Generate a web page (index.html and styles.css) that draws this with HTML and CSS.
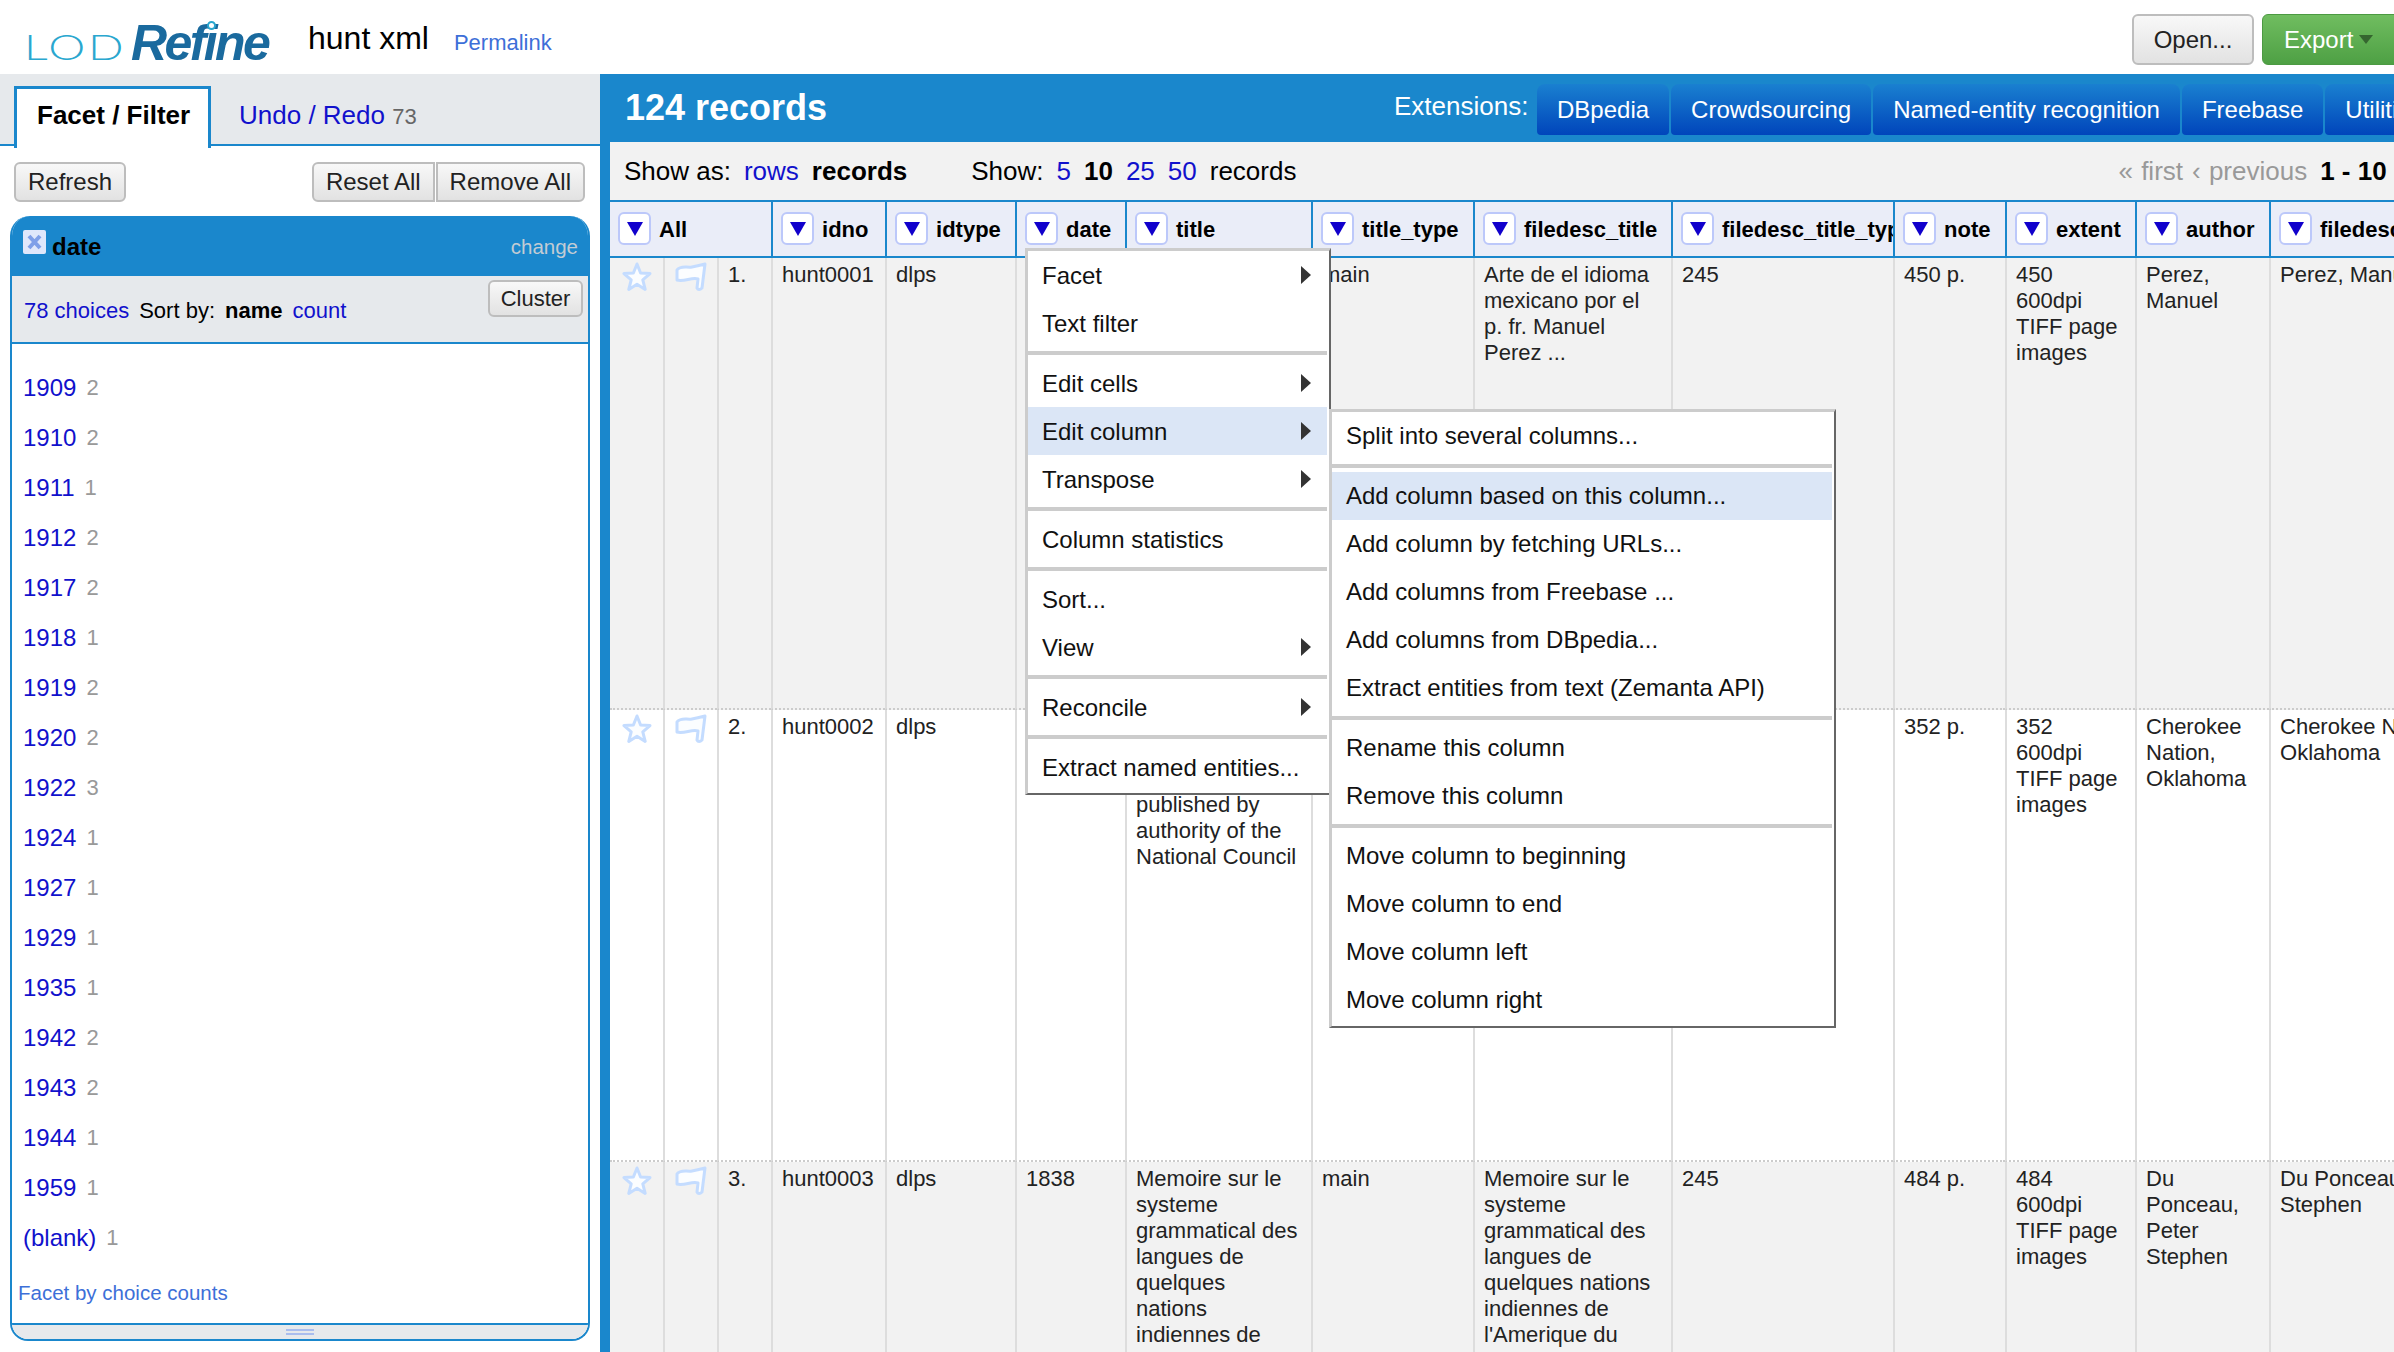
FILE: index.html
```html
<!DOCTYPE html>
<html>
<head>
    <meta charset="utf-8">
    <title>hunt xml - LOD Refine</title>
    <link rel="stylesheet" href="styles.css">
</head>
<body>
    <svg class="defs" width="0" height="0">
        <symbol id="star" viewBox="0 0 30 30">
            <path d="M15 2 L18.6 11 L28 11.6 L20.8 17.8 L23.2 27.4 L15 22.2 L6.8 27.4 L9.2 17.8 L2 11.6 L11.4 11 Z"/>
        </symbol>
        <symbol id="flag" viewBox="0 0 32 30">
            <path d="M2 8 C6 3 12 6 17 5 C22 4 26 3 30 2 L27 26 C25 28 23 28 22 26 L23 17 C17 15 9 20 2 18 Z"/>
        </symbol>
    </svg>

    <header class="app-header">
        <div class="logo">
            <span class="logo-lod">LOD</span><span class="logo-refine">Refine</span>
            <span class="logo-ring"></span>
        </div>
        <span class="project-name">hunt xml</span>
        <a class="permalink">Permalink</a>
        <div class="header-actions">
            <button class="btn btn-open">Open...</button>
            <button class="btn-export">Export<span class="caret"></span></button>
        </div>
    </header>

    <main class="app-main">
        <aside class="left-panel">
            <div class="tabs">
                <div class="tab tab-active">Facet / Filter</div>
                <div class="tab"><a>Undo / Redo</a> <span class="tab-count">73</span></div>
            </div>

            <div class="facet-actions">
                <button class="btn">Refresh</button>
                <div class="btn-group">
                    <button class="btn">Reset All</button>
                    <button class="btn">Remove All</button>
                </div>
            </div>

            <section class="facet">
                <div class="facet-title">
                    <svg class="facet-close" viewBox="0 0 23 24">
                        <rect width="23" height="24" rx="2"/>
                        <path d="M6 6 L17 18 M17 6 L6 18"/>
                    </svg>
                    <span class="facet-name">date</span>
                    <span class="facet-change">change</span>
                </div>
                <div class="facet-controls">
                    <a>78 choices</a>
                    <span>Sort by:</span>
                    <b>name</b>
                    <a>count</a>
                    <button class="btn btn-cluster">Cluster</button>
                </div>
                <div class="facet-body">
                    <div class="choice"><a>1909</a><span>2</span></div>
                    <div class="choice"><a>1910</a><span>2</span></div>
                    <div class="choice"><a>1911</a><span>1</span></div>
                    <div class="choice"><a>1912</a><span>2</span></div>
                    <div class="choice"><a>1917</a><span>2</span></div>
                    <div class="choice"><a>1918</a><span>1</span></div>
                    <div class="choice"><a>1919</a><span>2</span></div>
                    <div class="choice"><a>1920</a><span>2</span></div>
                    <div class="choice"><a>1922</a><span>3</span></div>
                    <div class="choice"><a>1924</a><span>1</span></div>
                    <div class="choice"><a>1927</a><span>1</span></div>
                    <div class="choice"><a>1929</a><span>1</span></div>
                    <div class="choice"><a>1935</a><span>1</span></div>
                    <div class="choice"><a>1942</a><span>2</span></div>
                    <div class="choice"><a>1943</a><span>2</span></div>
                    <div class="choice"><a>1944</a><span>1</span></div>
                    <div class="choice"><a>1959</a><span>1</span></div>
                    <div class="choice"><a>(blank)</a><span>1</span></div>
                    <a class="facet-counts">Facet by choice counts</a>
                </div>
                <div class="facet-grip"><span></span></div>
            </section>
        </aside>

        <section class="right-panel">
            <div class="summary-bar">
                <h2 class="record-count">124 records</h2>
                <span class="extensions-label">Extensions:</span>
                <div class="extensions">
                    <button class="ext-btn">DBpedia</button>
                    <button class="ext-btn">Crowdsourcing</button>
                    <button class="ext-btn">Named-entity recognition</button>
                    <button class="ext-btn">Freebase</button>
                    <button class="ext-btn">Utilities</button>
                </div>
            </div>

            <div class="view-bar">
                <span>Show as:</span>
                <a>rows</a>
                <b>records</b>
                <span class="show-label">Show:</span>
                <a>5</a>
                <b>10</b>
                <a>25</a>
                <a>50</a>
                <span>records</span>
                <div class="pager">
                    <span class="pager-off">« first</span>
                    <span class="pager-off">‹ previous</span>
                    <b class="pager-range">1 - 10</b>
                </div>
            </div>

            <div class="table-wrap">
                <table class="data-table">
                    <colgroup>
                        <col class="c-star"><col class="c-flag"><col class="c-num">
                        <col class="c-idno"><col class="c-idtype"><col class="c-date">
                        <col class="c-title"><col class="c-type"><col class="c-ftitle">
                        <col class="c-ftype"><col class="c-note"><col class="c-extent">
                        <col class="c-author"><col class="c-fauthor">
                    </colgroup>
                    <thead>
                        <tr>
                            <th colspan="3"><div class="col-head"><span class="col-btn"></span>All</div></th>
                            <th><div class="col-head"><span class="col-btn"></span>idno</div></th>
                            <th><div class="col-head"><span class="col-btn"></span>idtype</div></th>
                            <th><div class="col-head"><span class="col-btn"></span>date</div></th>
                            <th><div class="col-head"><span class="col-btn"></span>title</div></th>
                            <th><div class="col-head"><span class="col-btn"></span>title_type</div></th>
                            <th><div class="col-head"><span class="col-btn"></span>filedesc_title</div></th>
                            <th><div class="col-head"><span class="col-btn"></span>filedesc_title_type</div></th>
                            <th><div class="col-head"><span class="col-btn"></span>note</div></th>
                            <th><div class="col-head"><span class="col-btn"></span>extent</div></th>
                            <th><div class="col-head"><span class="col-btn"></span>author</div></th>
                            <th><div class="col-head"><span class="col-btn"></span>filedesc_author</div></th>
                        </tr>
                    </thead>
                    <tbody>
                        <tr class="row-odd">
                            <td class="icon-cell"><svg class="icon-star"><use href="#star"/></svg></td>
                            <td class="icon-cell"><svg class="icon-flag"><use href="#flag"/></svg></td>
                            <td>1.</td>
                            <td>hunt0001</td>
                            <td>dlps</td>
                            <td></td>
                            <td></td>
                            <td>main</td>
                            <td>Arte de el idioma<br>mexicano por el<br>p. fr. Manuel<br>Perez ...</td>
                            <td>245</td>
                            <td>450 p.</td>
                            <td>450<br>600dpi<br>TIFF page<br>images</td>
                            <td>Perez,<br>Manuel</td>
                            <td class="nowrap">Perez, Manuel</td>
                        </tr>
                        <tr>
                            <td class="icon-cell"><svg class="icon-star"><use href="#star"/></svg></td>
                            <td class="icon-cell"><svg class="icon-flag"><use href="#flag"/></svg></td>
                            <td>2.</td>
                            <td>hunt0002</td>
                            <td>dlps</td>
                            <td></td>
                            <td><br><br><br>published by<br>authority of the<br>National Council</td>
                            <td></td>
                            <td></td>
                            <td></td>
                            <td>352 p.</td>
                            <td>352<br>600dpi<br>TIFF page<br>images</td>
                            <td>Cherokee<br>Nation,<br>Oklahoma</td>
                            <td class="nowrap">Cherokee Nation,<br>Oklahoma</td>
                        </tr>
                        <tr class="row-odd">
                            <td class="icon-cell"><svg class="icon-star"><use href="#star"/></svg></td>
                            <td class="icon-cell"><svg class="icon-flag"><use href="#flag"/></svg></td>
                            <td>3.</td>
                            <td>hunt0003</td>
                            <td>dlps</td>
                            <td>1838</td>
                            <td>Memoire sur le<br>systeme<br>grammatical des<br>langues de<br>quelques<br>nations<br>indiennes de<br>l'Amerique du</td>
                            <td>main</td>
                            <td>Memoire sur le<br>systeme<br>grammatical des<br>langues de<br>quelques nations<br>indiennes de<br>l'Amerique du<br>Nord ...</td>
                            <td>245</td>
                            <td>484 p.</td>
                            <td>484<br>600dpi<br>TIFF page<br>images</td>
                            <td>Du<br>Ponceau,<br>Peter<br>Stephen</td>
                            <td class="nowrap">Du Ponceau, Peter<br>Stephen</td>
                        </tr>
                    </tbody>
                </table>
            </div>
        </section>
    </main>

    <div class="menu menu-column">
        <div class="menu-item">Facet<i class="arrow"></i></div>
        <div class="menu-item">Text filter</div>
        <div class="menu-sep"></div>
        <div class="menu-item">Edit cells<i class="arrow"></i></div>
        <div class="menu-item menu-hover">Edit column<i class="arrow"></i></div>
        <div class="menu-item">Transpose<i class="arrow"></i></div>
        <div class="menu-sep"></div>
        <div class="menu-item">Column statistics</div>
        <div class="menu-sep"></div>
        <div class="menu-item">Sort...</div>
        <div class="menu-item">View<i class="arrow"></i></div>
        <div class="menu-sep"></div>
        <div class="menu-item">Reconcile<i class="arrow"></i></div>
        <div class="menu-sep"></div>
        <div class="menu-item">Extract named entities...</div>
    </div>

    <div class="menu menu-sub">
        <div class="menu-item">Split into several columns...</div>
        <div class="menu-sep"></div>
        <div class="menu-item menu-hover">Add column based on this column...</div>
        <div class="menu-item">Add column by fetching URLs...</div>
        <div class="menu-item">Add columns from Freebase ...</div>
        <div class="menu-item">Add columns from DBpedia...</div>
        <div class="menu-item">Extract entities from text (Zemanta API)</div>
        <div class="menu-sep"></div>
        <div class="menu-item">Rename this column</div>
        <div class="menu-item">Remove this column</div>
        <div class="menu-sep"></div>
        <div class="menu-item">Move column to beginning</div>
        <div class="menu-item">Move column to end</div>
        <div class="menu-item">Move column left</div>
        <div class="menu-item">Move column right</div>
    </div>
</body>
</html>
```

FILE: styles.css
```css
html, body {
    height: 100%;
}

body {
    margin: 0;
    display: flex;
    flex-direction: column;
    overflow: hidden;
    background: #fff;
    color: #000;
    font-family: "Liberation Sans", Arial, sans-serif;
    font-size: 22px;
}

a {
    color: #1111cc;
}

button {
    font-family: inherit;
}

.defs {
    position: absolute;
}

/* top header */
.app-header {
    height: 74px;
    flex: none;
    box-sizing: border-box;
    padding-top: 5px;
    display: flex;
    align-items: center;
    overflow: hidden;
}

.logo {
    position: relative;
    width: 270px;
    margin: 10px 0 0 24px;
    display: flex;
    align-items: baseline;
    line-height: 50px;
    white-space: nowrap;
}

.logo-lod {
    width: 107px;
    font-family: Lato, sans-serif;
    font-weight: 300;
    font-size: 36px;
    letter-spacing: 2px;
    color: #2aa7cf;
    transform: scaleX(1.3);
    transform-origin: left;
}

.logo-refine {
    font-weight: bold;
    font-style: italic;
    font-size: 50px;
    letter-spacing: -2.6px;
    color: #1a6a9e;
}

.logo-ring {
    position: absolute;
    left: 183px;
    top: 3px;
    width: 9px;
    height: 9px;
    box-sizing: border-box;
    border: 2px solid #2aa7cf;
    border-radius: 50%;
    background: #fff;
}

.project-name {
    margin-left: 14px;
    font-size: 32px;
    position: relative;
    top: -1px;
}

.permalink {
    margin: 6px 0 0 25px;
    color: #3d6fd8;
}

.header-actions {
    margin-left: auto;
    display: flex;
    gap: 8px;
}

.btn {
    height: 40px;
    padding: 0 12px;
    border: 2px solid #bdbdbd;
    border-radius: 6px;
    background: linear-gradient(#f8f8f8, #e2e2e2);
    font-size: 24px;
    color: #222;
    white-space: nowrap;
}

.btn-open {
    width: 122px;
    height: 51px;
    padding: 0;
}

.btn-export {
    width: 150px;
    height: 51px;
    margin-right: -18px;
    padding: 0 0 0 21px;
    display: flex;
    align-items: center;
    border: 1px solid #4c9a42;
    border-radius: 6px;
    background: linear-gradient(#70bd60, #4ea044);
    color: #fff;
    font-size: 24px;
}

.caret {
    margin-left: 6px;
    border-top: 9px solid #35662f;
    border-left: 7px solid transparent;
    border-right: 7px solid transparent;
}

/* main layout */
.app-main {
    flex: 1;
    min-height: 0;
    display: flex;
}

.left-panel {
    width: 600px;
    flex: none;
}

.tabs {
    height: 72px;
    box-sizing: border-box;
    padding: 12px 0 0 14px;
    display: flex;
    gap: 28px;
    background: #e6e9ec;
    border-bottom: 2px solid #1a87cc;
}

.tab {
    height: 60px;
    line-height: 58px;
    font-size: 26px;
}

.tab-active {
    width: 197px;
    height: 62px;
    box-sizing: border-box;
    padding-left: 20px;
    line-height: 52px;
    border: 3px solid #1a87cc;
    border-bottom: none;
    background: #fff;
    font-weight: bold;
}

.tab-count {
    font-size: 22px;
    color: #666;
}

.facet-actions {
    padding: 16px 15px 14px 14px;
    display: flex;
    justify-content: space-between;
}

.btn-group {
    display: flex;
    gap: 1px;
}

.btn-group .btn:first-child {
    border-radius: 6px 0 0 6px;
}

.btn-group .btn:last-child {
    border-radius: 0 6px 6px 0;
}

/* date facet */
.facet {
    width: 580px;
    height: 1125px;
    margin-left: 10px;
    box-sizing: border-box;
    display: flex;
    flex-direction: column;
    border: 2px solid #1a87cc;
    border-top: none;
    border-radius: 20px 20px 18px 18px;
    overflow: hidden;
}

.facet-title {
    height: 60px;
    flex: none;
    box-sizing: border-box;
    margin: 0 -2px;
    padding: 2px 12px 0 13px;
    display: flex;
    align-items: center;
    background: #1a87cc;
}

.facet-close {
    width: 23px;
    height: 24px;
    margin-top: -10px;
}

.facet-close rect {
    fill: #dfe7fb;
}

.facet-close path {
    fill: none;
    stroke: #7f9fe8;
    stroke-width: 4;
}

.facet-name {
    margin-left: 6px;
    font-size: 24px;
    font-weight: bold;
}

.facet-change {
    margin-left: auto;
    font-size: 20.5px;
    color: #c3ccd4;
}

.facet-controls {
    height: 68px;
    flex: none;
    box-sizing: border-box;
    padding: 3px 5px 0 12px;
    display: flex;
    align-items: center;
    gap: 10px;
    background: #e6e9ec;
    border-bottom: 2px solid #1a87cc;
}

.btn-cluster {
    align-self: flex-start;
    width: 95px;
    height: 37px;
    margin: 1px 0 0 auto;
    padding: 0;
    font-size: 22px;
}

.facet-body {
    flex: 1;
    padding: 19px 12px 0 11px;
    background: #fff;
}

.choice {
    height: 50px;
    display: flex;
    align-items: center;
    gap: 10px;
    font-size: 24px;
}

.choice span {
    font-size: 22px;
    color: #999;
}

.facet-counts {
    display: block;
    margin: 18px 0 0 -5px;
    font-size: 20.5px;
    color: #3d6fd8;
}

.facet-grip {
    height: 14px;
    flex: none;
    display: flex;
    align-items: center;
    justify-content: center;
    background: #e6e9ec;
    border-top: 2px solid #1a87cc;
}

.facet-grip span {
    width: 28px;
    height: 2px;
    border-top: 2px solid #a9bdee;
    border-bottom: 2px solid #a9bdee;
}

/* right side */
.right-panel {
    flex: 1;
    min-width: 0;
    display: flex;
    flex-direction: column;
    border-left: 10px solid #1a87cc;
    overflow: hidden;
}

.summary-bar {
    height: 68px;
    flex: none;
    margin-left: -10px;
    padding-left: 25px;
    display: flex;
    align-items: center;
    background: #1a87cc;
    color: #fff;
    white-space: nowrap;
}

.record-count {
    width: 769px;
    flex: none;
    margin: 0;
    font-size: 36px;
}

.extensions-label {
    width: 143px;
    flex: none;
    font-size: 26px;
    margin-top: -3px;
}

.extensions {
    flex: none;
    display: flex;
    gap: 2px;
    margin-top: 3px;
}

.ext-btn {
    height: 51px;
    padding: 0 20px;
    border: none;
    border-radius: 8px 8px 4px 4px;
    background: linear-gradient(#1a80d0, #0045bb);
    color: #fff;
    font-size: 24px;
    white-space: nowrap;
}

.view-bar {
    height: 58px;
    flex: none;
    padding-left: 14px;
    display: flex;
    align-items: center;
    gap: 13px;
    background: #f2f2f2;
    font-size: 26px;
    white-space: nowrap;
}

.show-label {
    margin-left: 51px;
}

.pager {
    margin-left: 809px;
    display: flex;
    gap: 9px;
}

.pager-off {
    word-spacing: 1px;
    color: #999;
}

.pager-range {
    margin-left: 4px;
}

.table-wrap {
    flex: 1;
    min-height: 0;
    overflow: hidden;
}

.data-table {
    width: 1784px;
    table-layout: fixed;
    border-collapse: separate;
    border-spacing: 0;
}

.c-star { width: 53px; }
.c-flag { width: 54px; }
.c-num { width: 54px; }
.c-idno { width: 114px; }
.c-idtype { width: 130px; }
.c-date { width: 110px; }
.c-title { width: 186px; }
.c-type { width: 162px; }
.c-ftitle { width: 198px; }
.c-ftype { width: 222px; }
.c-note { width: 112px; }
.c-extent { width: 130px; }
.c-author { width: 134px; }
.c-fauthor { width: 225px; }

.data-table th {
    height: 58px;
    box-sizing: border-box;
    padding: 10px 0 0 0;
    overflow: hidden;
    vertical-align: top;
    background: #eaedf8;
    border-top: 2px solid #1a87cc;
    border-bottom: 2px solid #1a87cc;
    border-left: 2px solid #1a87cc;
    text-align: left;
}

.data-table th:first-child {
    border-left: none;
}

.col-head {
    display: flex;
    align-items: flex-start;
    gap: 8px;
    padding-left: 8px;
    line-height: 36px;
    white-space: nowrap;
}

.col-btn {
    width: 33px;
    height: 33px;
    flex: none;
    box-sizing: border-box;
    display: flex;
    align-items: center;
    justify-content: center;
    background: #fff;
    border: 2px solid #bcc8fa;
    border-radius: 6px;
}

.col-btn::after {
    content: "";
    margin-top: 1px;
    border-top: 14px solid #1100cc;
    border-left: 8px solid transparent;
    border-right: 8px solid transparent;
}

.data-table td {
    height: 452px;
    box-sizing: border-box;
    padding: 4px 9px 0 9px;
    vertical-align: top;
    overflow: hidden;
    line-height: 26px;
    color: #222;
    border-left: 2px solid #ddd;
    border-bottom: 2px dotted #ccc;
}

.data-table td:first-child {
    border-left: none;
}

.row-odd td {
    background: #f2f2f2;
}

.data-table .nowrap {
    white-space: nowrap;
}

.data-table .icon-cell {
    padding: 4px 0 0 0;
    text-align: center;
}

.icon-star,
.icon-flag {
    height: 30px;
    fill: #fbfdff;
    stroke: #c4dcff;
    stroke-width: 3;
    stroke-linejoin: round;
}

.icon-star {
    width: 30px;
}

.icon-flag {
    width: 32px;
}

/* column dropdown */
.menu {
    position: absolute;
    box-sizing: border-box;
    padding: 0 2px 2px 0;
    background: #fff;
    border-top: 3px solid #ccc;
    border-left: 3px solid #ccc;
    border-right: 2px solid #666;
    border-bottom: 2px solid #666;
    font-size: 24px;
    color: #111;
    white-space: nowrap;
}

.menu-column {
    left: 1025px;
    top: 248px;
    width: 306px;
    height: 547px;
}

.menu-sub {
    left: 1329px;
    top: 409px;
    width: 507px;
    height: 619px;
}

.menu-item {
    height: 48px;
    box-sizing: border-box;
    padding: 0 16px 0 14px;
    display: flex;
    align-items: center;
    justify-content: space-between;
}

.menu-column .menu-item {
    padding-top: 2px;
}

.menu-column .arrow {
    margin-top: -2px;
}

.menu-hover {
    background: #dbe6f6;
}

.menu-sep {
    height: 4px;
    margin: 4px 0;
    background: #ccc;
}

.arrow {
    border-left: 10px solid #333;
    border-top: 9px solid transparent;
    border-bottom: 9px solid transparent;
}
```
